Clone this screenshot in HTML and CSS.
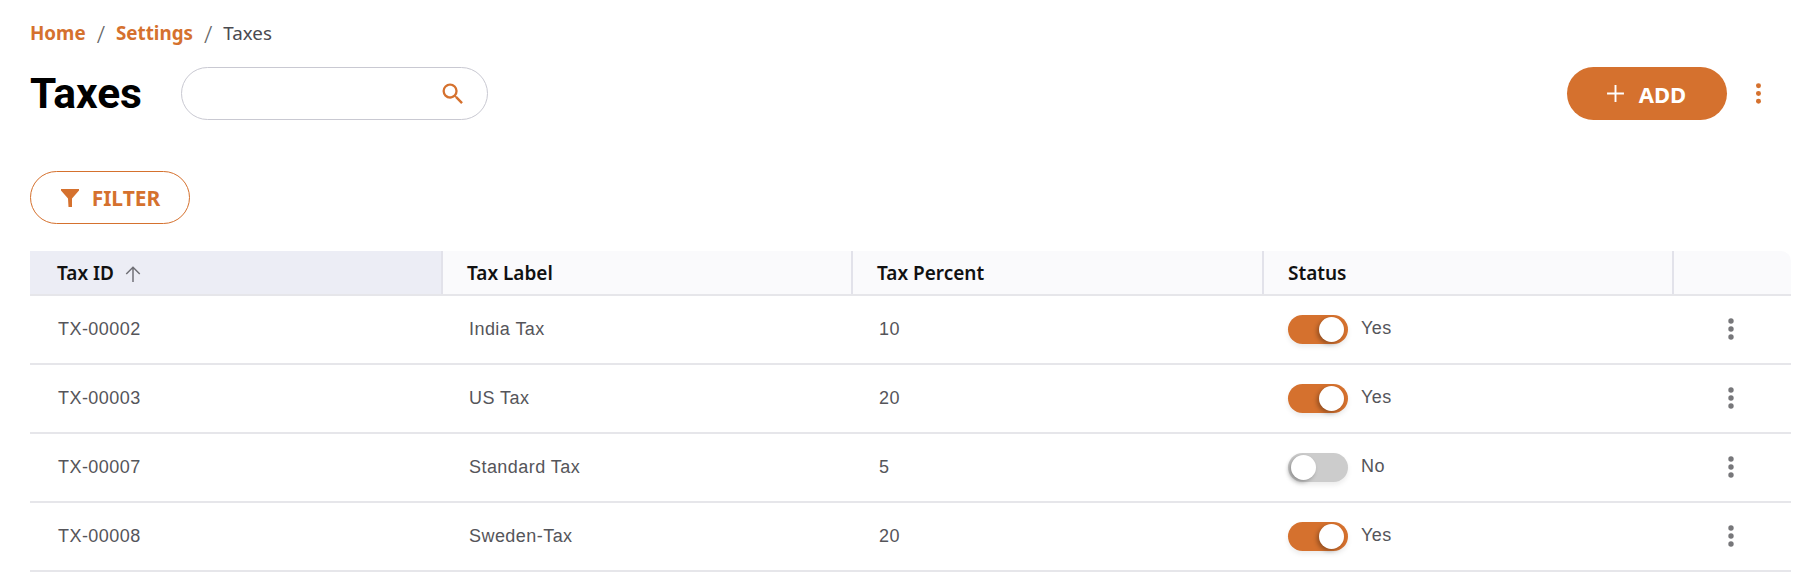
FILE: index.html
```html
<!DOCTYPE html>
<html>

<head>
    <meta charset="utf-8" />
    <title>Taxes</title>
    <link rel="stylesheet" href="styles.css">
</head>

<body>
    <div class="breadcrumb">
        <a class="crumb">Home</a>
        <span class="sep">/</span>
        <a class="crumb">Settings</a>
        <span class="sep">/</span>
        <span class="current">Taxes</span>
    </div>

    <div class="titlebar">
        <h1>Taxes</h1>
        <div class="search">
            <svg class="search-icon" viewBox="0 0 24 24"><path d="M15.5 14h-.79l-.28-.27A6.471 6.471 0 0 0 16 9.5 6.5 6.5 0 1 0 9.5 16c1.61 0 3.09-.59 4.23-1.57l.27.28v.79l5 4.99L20.49 19l-4.99-5zm-6 0C7.01 14 5 11.99 5 9.5S7.01 5 9.5 5 14 7.01 14 9.5 11.99 14 9.5 14z"/></svg>
        </div>
        <div class="spacer"></div>
        <button class="btn-add">
            <svg class="plus-icon" viewBox="0 0 18 18"><path d="M9 1v16M1 9h16"/></svg>
            ADD
        </button>
        <svg class="more-icon" viewBox="0 0 6 24"><circle cx="3" cy="4" r="2.6"/><circle cx="3" cy="12" r="2.6"/><circle cx="3" cy="20" r="2.6"/></svg>
    </div>

    <button class="btn-filter">
        <svg class="filter-icon" viewBox="0 0 20 20"><path d="M1 1h18v1.6L12 10.500v8.500h-3.500L8 10.500 1 2.600z"/></svg>
        FILTER
    </button>

    <table class="taxes">
        <thead>
            <tr>
                <th class="sorted">Tax ID
                    <svg class="sort-icon" viewBox="0 0 16 16"><path d="M8 15V2M2 8l6-6 6 6"/></svg>
                </th>
                <th>Tax Label</th>
                <th>Tax Percent</th>
                <th class="status-head">Status</th>
                <th class="last"></th>
            </tr>
        </thead>
        <tbody>
            <tr>
                <td>TX-00002</td>
                <td>India Tax</td>
                <td>10</td>
                <td><div class="status"><span class="toggle on"></span><span class="status-text">Yes</span></div></td>
                <td class="actions"><svg class="row-more" viewBox="0 0 6 22"><circle cx="3" cy="3" r="2.700"/><circle cx="3" cy="11" r="2.700"/><circle cx="3" cy="19" r="2.700"/></svg></td>
            </tr>
            <tr>
                <td>TX-00003</td>
                <td>US Tax</td>
                <td>20</td>
                <td><div class="status"><span class="toggle on"></span><span class="status-text">Yes</span></div></td>
                <td class="actions"><svg class="row-more" viewBox="0 0 6 22"><circle cx="3" cy="3" r="2.700"/><circle cx="3" cy="11" r="2.700"/><circle cx="3" cy="19" r="2.700"/></svg></td>
            </tr>
            <tr>
                <td>TX-00007</td>
                <td>Standard Tax</td>
                <td>5</td>
                <td><div class="status"><span class="toggle"></span><span class="status-text">No</span></div></td>
                <td class="actions"><svg class="row-more" viewBox="0 0 6 22"><circle cx="3" cy="3" r="2.700"/><circle cx="3" cy="11" r="2.700"/><circle cx="3" cy="19" r="2.700"/></svg></td>
            </tr>
            <tr>
                <td>TX-00008</td>
                <td>Sweden-Tax</td>
                <td>20</td>
                <td><div class="status"><span class="toggle on"></span><span class="status-text">Yes</span></div></td>
                <td class="actions"><svg class="row-more" viewBox="0 0 6 22"><circle cx="3" cy="3" r="2.700"/><circle cx="3" cy="11" r="2.700"/><circle cx="3" cy="19" r="2.700"/></svg></td>
            </tr>
        </tbody>
    </table>
</body>

</html>
```

FILE: styles.css
```css
* {
    box-sizing: border-box;
}

body {
    margin: 0;
    padding: 20px 29px 0 30px;
    background-color: white;
    font-family: "Noto Sans", sans-serif;
    color: #4a4a50;
}

.breadcrumb {
    display: flex;
    align-items: center;
    gap: 11px;
    height: 26px;
    font-size: 18.800px;
}

.crumb {
    color: #d5712e;
    font-weight: 700;
}

.sep {
    color: #666;
    font-size: 24px;
    font-weight: 300;
}

.titlebar {
    display: flex;
    align-items: center;
    height: 53px;
    margin-top: 21px;
}

h1 {
    width: 151px;
    margin: 0;
    font-family: Roboto, sans-serif;
    font-size: 42.500px;
    font-weight: 700;
    color: black;
}

.search {
    display: flex;
    align-items: center;
    justify-content: flex-end;
    width: 307px;
    height: 53px;
    padding-right: 20px;
    border: 1px solid #c9c9d2;
    border-radius: 27px;
}

.search-icon {
    width: 28px;
    height: 28px;
    fill: #d5712e;
}

.spacer {
    flex: 1;
}

.btn-add {
    display: flex;
    align-items: center;
    justify-content: center;
    gap: 14px;
    width: 160px;
    height: 53px;
    padding: 0 2px 0 0;
    border: none;
    border-radius: 27px;
    background-color: #d5712e;
    color: white;
    font-family: "Noto Sans", sans-serif;
    font-size: 22px;
    font-weight: 700;
}

.plus-icon {
    width: 19px;
    height: 19px;
    fill: none;
    stroke: white;
    stroke-width: 1.800;
}

.more-icon {
    width: 7px;
    height: 23px;
    margin: 0 29px 0 28px;
    fill: #d5712e;
}

.btn-filter {
    display: flex;
    align-items: center;
    justify-content: center;
    gap: 12px;
    width: 160px;
    height: 53px;
    margin-top: 51px;
    border: 1px solid #d5712e;
    border-radius: 27px;
    background-color: white;
    color: #d5712e;
    font-family: "Noto Sans", sans-serif;
    font-size: 21px;
    font-weight: 700;
}

.filter-icon {
    width: 20px;
    height: 20px;
    fill: #d5712e;
}

table.taxes {
    width: 1761px;
    margin-top: 27px;
    border-collapse: collapse;
    table-layout: fixed;
}

.taxes th {
    height: 44px;
    padding: 0 0 0 24px;
    border-bottom: 2px solid #e6e6ea;
    background-color: #fafafc;
    color: #111;
    font-size: 19px;
    font-weight: 600;
    text-align: left;
}

.taxes th:first-child {
    width: 412px;
    padding-left: 27px;
    background-color: #ecedf5;
}

.taxes th:nth-child(2),
.taxes th:nth-child(4) {
    width: 410px;
}

.taxes th:nth-child(3) {
    width: 411px;
}

.taxes th:not(.last) {
    border-right: 2px solid #e2e2ea;
}

.taxes th.last {
    border-top-right-radius: 10px;
}

.sort-icon {
    width: 18px;
    height: 18px;
    margin-left: 5px;
    vertical-align: -3px;
    fill: none;
    stroke: #6f6f75;
    stroke-width: 1.300;
}

.taxes td {
    height: 69px;
    padding: 0 0 0 27px;
    border-bottom: 2px solid #e6e6ea;
    font-family: "Liberation Sans", sans-serif;
    font-size: 18px;
    letter-spacing: .45px;
    color: #55555a;
}

.taxes td:first-child {
    padding-left: 28px;
}

.status {
    display: flex;
    align-items: center;
    gap: 13px;
    margin-left: -2px;
}

.status-text {
    margin-top: -3px;
}

.toggle {
    position: relative;
    width: 60px;
    height: 29px;
    margin-top: -1px;
    border-radius: 15px;
    background-color: #ccc;
    box-shadow: 0 3px 5px rgba(0, 0, 0, .08);
}

.toggle::after {
    content: "";
    position: absolute;
    top: 2px;
    left: 3px;
    width: 25px;
    height: 25px;
    border-radius: 50%;
    background-color: white;
    box-shadow: -2px 2px 4px rgba(0, 0, 0, .3);
}

.toggle.on {
    background-color: #d5712e;
}

.toggle.on::after {
    left: 31px;
}

.taxes td.actions {
    padding: 0 2px 0 0;
    text-align: center;
}

.row-more {
    display: block;
    width: 6px;
    height: 22px;
    margin: -2px auto 0;
    fill: #77777a;
}
```
